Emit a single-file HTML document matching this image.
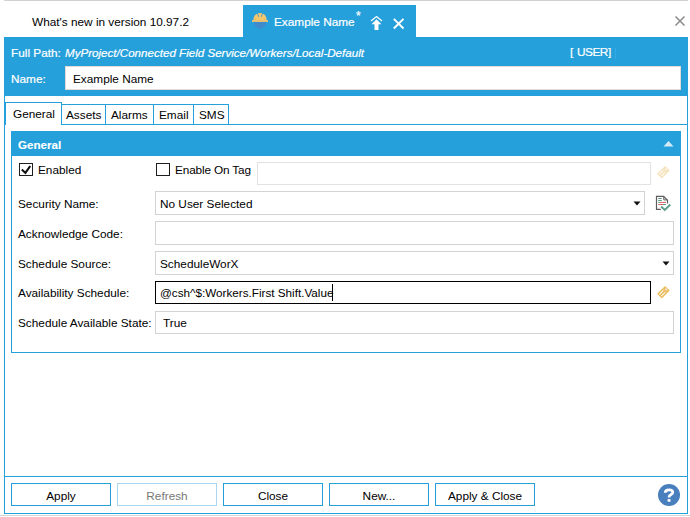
<!DOCTYPE html>
<html><head><meta charset="utf-8">
<style>
html,body{margin:0;padding:0;width:690px;height:517px;overflow:hidden;background:#fff;}
body{position:relative;font-family:"Liberation Sans",sans-serif;font-size:11.8px;color:#000;}
.a{position:absolute;box-sizing:border-box;}
.t{position:absolute;line-height:14px;white-space:pre;}
.w{color:#fff;-webkit-text-stroke:0.2px #fff;}
.tb{position:absolute;box-sizing:border-box;border:1px solid #d4d2d3;background:#fff;}
.tab{position:absolute;box-sizing:border-box;border:1px solid #26a0da;border-bottom:none;background:#fff;}
.btn{position:absolute;box-sizing:border-box;border:1px solid #26a0da;background:#fff;width:100px;height:23px;top:483px;text-align:center;line-height:25px;}
</style></head><body>
<!-- top gray line -->
<div class="a" style="left:4px;top:0;width:684px;height:1px;background:#d2d0d2"></div>
<!-- bottom gray line -->
<div class="a" style="left:0;top:515px;width:690px;height:1px;background:#d6d4d4"></div>

<!-- tab strip -->
<div class="t" style="left:32px;top:15px;">What's new in version 10.97.2</div>
<div class="a" style="left:243px;top:5px;width:173px;height:32px;background:#26a0da"></div>
<!-- helmet -->
<svg class="a" style="left:251px;top:12px" width="18" height="18" viewBox="0 0 18 18">
  <path d="M3 9.6 L15 9.6 C15 14 12.5 16.7 9 16.7 C5.5 16.7 3 14 3 9.6 Z" fill="#3e8ccb"/>
  <path d="M2.3 8.4 C2.3 4.2 5 1 9 1 C13 1 15.7 4.2 15.7 8.4 Z" fill="#f8c56d"/>
  <rect x="1" y="8.2" width="16" height="1.7" fill="#f8c56d"/>
  <path d="M6.3 1.2 L7.8 4.8 M11.7 1.2 L10.2 4.8" stroke="#26a0da" stroke-width="0.9"/>
</svg>
<div class="t w" style="left:274px;top:15px;">Example Name</div>
<div class="t w" style="left:356px;top:9px;font-size:12px;">*</div>
<!-- pin/up arrow icon -->
<svg class="a" style="left:369px;top:15px" width="15" height="16" viewBox="0 0 15 16">
  <path d="M2 6 L7.5 1.5 L13 6" fill="none" stroke="#fff" stroke-width="1.3"/>
  <path d="M7.5 4.2 L12.5 9.2 L9.5 9.2 L9.5 15 L5.5 15 L5.5 9.2 L2.5 9.2 Z" fill="#fff"/>
</svg>
<!-- tab close X -->
<svg class="a" style="left:392px;top:17px" width="13" height="13" viewBox="0 0 13 13">
  <path d="M1.8 1.8 L11.5 11.5 M11.5 1.8 L1.8 11.5" stroke="#fff" stroke-width="1.9"/>
</svg>
<!-- window close X -->
<svg class="a" style="left:674px;top:15px" width="12" height="12" viewBox="0 0 12 12">
  <path d="M1.5 1.5 L10.5 10.5 M10.5 1.5 L1.5 10.5" stroke="#8a8a8a" stroke-width="1.5"/>
</svg>

<!-- header -->
<div class="a" style="left:4px;top:37px;width:684px;height:59px;background:#26a0da"></div>
<div class="t w" style="left:11px;top:46px;">Full Path:</div>
<div class="t" style="left:65px;top:46px;font-style:italic;color:#fff;font-size:11.6px;-webkit-text-stroke:0.2px #fff;">MyProject/Connected Field Service/Workers/Local-Default</div>
<div class="t w" style="left:570px;top:45px;">[</div><div class="t w" style="left:577px;top:45px;letter-spacing:-0.5px;">USER</div><div class="t w" style="left:608px;top:45px;">]</div>
<div class="a" style="left:615px;top:48px;width:1px;height:11px;background:#33aae6"></div>
<div class="t w" style="left:11px;top:72px;">Name:</div>
<div class="tb" style="left:65px;top:66px;width:616px;height:24px;border-color:#e3d9d6"></div>
<div class="t" style="left:73px;top:72px;">Example Name</div>

<!-- outer frame -->
<div class="a" style="left:4px;top:95px;width:1px;height:419px;background:#26a0da"></div>
<div class="a" style="left:687px;top:95px;width:1px;height:419px;background:#26a0da"></div>
<div class="a" style="left:4px;top:513px;width:684px;height:1px;background:#26a0da"></div>

<!-- tabs -->
<div class="a" style="left:61px;top:124px;width:626px;height:1px;background:#26a0da"></div>
<div class="tab" style="left:5px;top:102px;width:57px;height:23px;"></div>
<div class="tab" style="left:61px;top:104px;width:45px;height:21px;"></div>
<div class="tab" style="left:105px;top:104px;width:49px;height:21px;"></div>
<div class="tab" style="left:153px;top:104px;width:41px;height:21px;"></div>
<div class="tab" style="left:193px;top:104px;width:36px;height:21px;"></div>
<div class="a" style="left:61px;top:124px;width:626px;height:1px;background:#26a0da"></div>
<div class="t" style="left:13px;top:107px;">General</div>
<div class="t" style="left:66px;top:108px;">Assets</div>
<div class="t" style="left:111px;top:108px;">Alarms</div>
<div class="t" style="left:159px;top:108px;">Email</div>
<div class="t" style="left:199px;top:108px;">SMS</div>

<!-- section panel -->
<div class="a" style="left:11px;top:131px;width:670px;height:222px;border:1px solid #26a0da;"></div>
<div class="a" style="left:11px;top:131px;width:670px;height:25px;background:#26a0da"></div>
<div class="t w" style="left:18px;top:138px;font-weight:bold;font-size:11.6px;-webkit-text-stroke:0.1px #fff;">General</div>
<svg class="a" style="left:663px;top:140px" width="11" height="7" viewBox="0 0 11 7">
  <path d="M0.5 6.5 L5.5 1 L10.5 6.5 Z" fill="#d4ebf7"/>
</svg>

<!-- row 1 -->
<div class="a" style="left:19px;top:163px;width:14px;height:13px;border:1px solid #1e1e1e;background:#fff"></div>
<svg class="a" style="left:20px;top:164px" width="11" height="11" viewBox="0 0 11 11">
  <path d="M1.8 5.6 L5.4 8.9 L10.2 2" fill="none" stroke="#111" stroke-width="2.1"/>
</svg>
<div class="t" style="left:38px;top:163px;">Enabled</div>
<div class="a" style="left:156px;top:163px;width:14px;height:13px;border:1px solid #1e1e1e;background:#fff"></div>
<div class="t" style="left:175px;top:163px;letter-spacing:-0.15px;">Enable On Tag</div>
<div class="tb" style="left:257px;top:162px;width:394px;height:23px;border-color:#e2e2e2"></div>
<!-- tag icon faded -->
<svg class="a" style="left:652px;top:162px" width="22" height="22" viewBox="0 0 22 22">
  <g transform="translate(11.4 10.2) rotate(-45)" opacity="0.42">
    <rect x="-5.6" y="-3.3" width="11.2" height="6.6" fill="#ebbb5c"/>
    <path d="M-4.3 -1.3 L1.2 -1.3 M-4.3 1.3 L1.2 1.3" stroke="#fff" stroke-width="1"/>
    <path d="M2.4 -3.3 L2.4 3.3" stroke="#f3d79a" stroke-width="0.6"/>
    <path d="M4 -1.6 L4.4 -0.4 L5.4 0 L4.4 0.4 L4 1.6 L3.6 0.4 L2.6 0 L3.6 -0.4 Z" fill="#fff"/>
  </g>
</svg>

<!-- row 2 security -->
<div class="t" style="left:18px;top:197px;">Security Name:</div>
<div class="tb" style="left:155px;top:191px;width:490px;height:24px;"></div>
<div class="t" style="left:160px;top:197px;">No User Selected</div>
<svg class="a" style="left:633px;top:201px" width="8" height="5" viewBox="0 0 8 5"><path d="M0.5 0.5 L7.5 0.5 L4 4.5 Z" fill="#111"/></svg>
<!-- doc icon -->
<svg class="a" style="left:652px;top:192px" width="22" height="22" viewBox="0 0 22 22">
  <path d="M8.8 17.4 L4.5 17.4 L4.5 4.3 L11.6 4.3 L15.5 8.2 L15.5 11.6" fill="none" stroke="#5c5c5c" stroke-width="1.2"/>
  <path d="M11.8 4.5 L11.8 7.9 L15.3 7.9" fill="none" stroke="#5c5c5c" stroke-width="1"/>
  <path d="M6.2 6.5 L9.8 6.5 M6.2 8.5 L9.8 8.5 M6.2 10.4 L8 10.4 M11 12.5 L14 12.5" stroke="#5f9f88" stroke-width="1"/>
  <path d="M8 10.4 L14 10.4 M6.2 12.5 L11 12.5" stroke="#d9605c" stroke-width="1"/>
  <path d="M9.1 14.6 L12.8 17.9 L18.3 12.5" fill="none" stroke="#5f9f88" stroke-width="2"/>
</svg>

<!-- row 3 ack -->
<div class="t" style="left:18px;top:227px;">Acknowledge Code:</div>
<div class="tb" style="left:155px;top:221px;width:519px;height:24px;"></div>

<!-- row 4 schedule source -->
<div class="t" style="left:18px;top:257px;">Schedule Source:</div>
<div class="tb" style="left:155px;top:251px;width:519px;height:24px;"></div>
<div class="t" style="left:160px;top:257px;">ScheduleWorX</div>
<svg class="a" style="left:662px;top:261px" width="8" height="5" viewBox="0 0 8 5"><path d="M0.5 0.5 L7.5 0.5 L4 4.5 Z" fill="#111"/></svg>

<!-- row 5 availability -->
<div class="t" style="left:18px;top:286px;">Availability Schedule:</div>
<div class="a" style="left:155px;top:281px;width:496px;height:23px;border:1px solid #000;background:#fff"></div>
<div class="t" style="left:160px;top:286px;font-size:11.7px;">@csh^$:Workers.First Shift.Value</div>
<div class="a" style="left:332px;top:284px;width:1px;height:17px;background:#000"></div>
<svg class="a" style="left:652px;top:282px" width="22" height="22" viewBox="0 0 22 22">
  <g transform="translate(11.4 10.2) rotate(-45)" opacity="1">
    <rect x="-5.6" y="-3.3" width="11.2" height="6.6" fill="#ebbb5c"/>
    <path d="M-4.3 -1.3 L1.2 -1.3 M-4.3 1.3 L1.2 1.3" stroke="#fff" stroke-width="1"/>
    <path d="M2.4 -3.3 L2.4 3.3" stroke="#f3d79a" stroke-width="0.6"/>
    <path d="M4 -1.6 L4.4 -0.4 L5.4 0 L4.4 0.4 L4 1.6 L3.6 0.4 L2.6 0 L3.6 -0.4 Z" fill="#fff"/>
  </g>
</svg>

<!-- row 6 available state -->
<div class="t" style="left:18px;top:316px;">Schedule Available State:</div>
<div class="tb" style="left:155px;top:311px;width:519px;height:23px;"></div>
<div class="t" style="left:163px;top:316px;">True</div>

<!-- bottom -->
<div class="a" style="left:4px;top:476px;width:684px;height:1px;background:#26a0da"></div>
<div class="btn" style="left:11px;">Apply</div>
<div class="btn" style="left:117px;border-color:#a9d7f0;color:#787878;">Refresh</div>
<div class="btn" style="left:223px;">Close</div>
<div class="btn" style="left:329px;">New...</div>
<div class="btn" style="left:435px;">Apply &amp; Close</div>
<svg class="a" style="left:658px;top:484px" width="22" height="22" viewBox="0 0 22 22">
  <circle cx="11" cy="11" r="11" fill="#4a7fbd"/>
  <path d="M7.2 8.7 C7.2 6.6 8.9 5.8 11 5.8 C13.2 5.8 14.8 6.9 14.8 8.5 C14.8 10.5 11.1 10.8 11.1 12.8 L11.1 13.5" fill="none" stroke="#fff" stroke-width="2.7"/>
  <rect x="9.6" y="15.1" width="2.9" height="2.6" fill="#fff"/>
</svg>
</body></html>
